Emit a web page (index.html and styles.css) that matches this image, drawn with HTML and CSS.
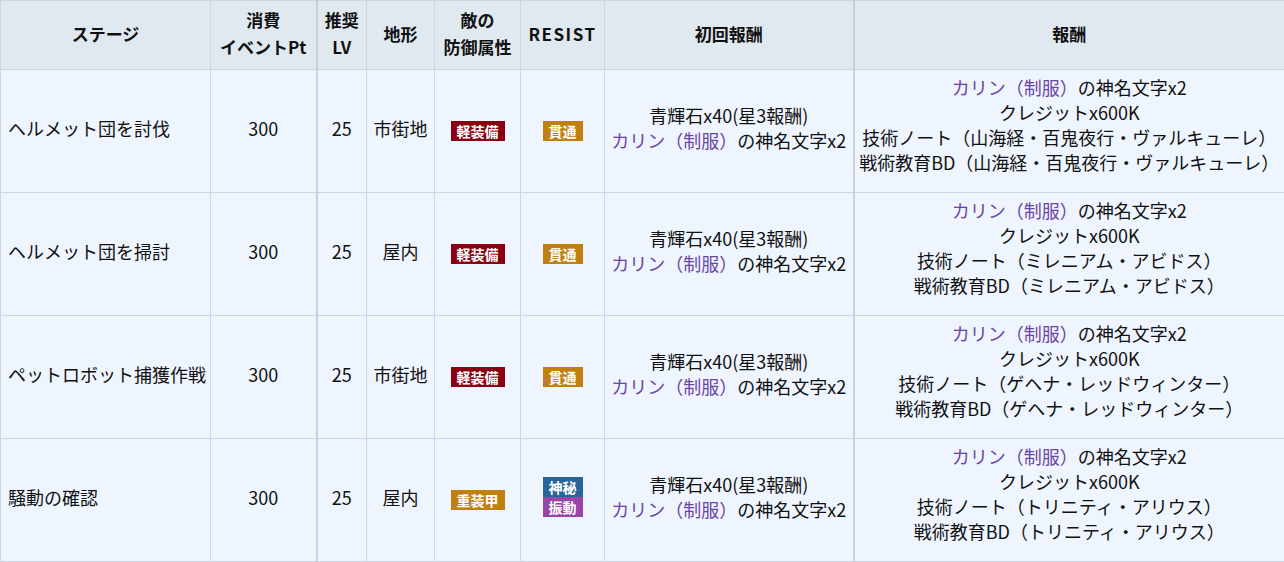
FILE: index.html
```html
<!DOCTYPE html>
<html lang="ja">
<head>
<meta charset="utf-8">
<link rel="stylesheet" href="styles.css">
</head>
<body>
<table class="stage-table">
  <colgroup>
    <col class="c-stage"><col class="c-pt"><col class="c-lv"><col class="c-terrain"><col class="c-def"><col class="c-res"><col class="c-first"><col class="c-reward">
  </colgroup>
  <thead>
    <tr>
      <th>ステージ</th>
      <th>消費<br>イベントPt</th>
      <th class="sep">推奨<br>LV</th>
      <th>地形</th>
      <th>敵の<br>防御属性</th>
      <th><span class="latin">RESIST</span></th>
      <th>初回報酬</th>
      <th class="sep">報酬</th>
    </tr>
  </thead>
  <tbody>
    <tr>
      <td class="left">ヘルメット団を討伐</td>
      <td>300</td>
      <td class="sep">25</td>
      <td>市街地</td>
      <td><span class="badge red">軽装備</span></td>
      <td><span class="badge orange">貫通</span></td>
      <td>青輝石x40(星3報酬)<br><span class="pu">カリン（制服）</span>の神名文字x2</td>
      <td class="sep multi"><span class="pu">カリン（制服）</span>の神名文字x2<br>クレジットx600K<br>技術ノート（山海経・百鬼夜行・ヴァルキューレ）<br>戦術教育BD（山海経・百鬼夜行・ヴァルキューレ）</td>
    </tr>
    <tr>
      <td class="left">ヘルメット団を掃討</td>
      <td>300</td>
      <td class="sep">25</td>
      <td>屋内</td>
      <td><span class="badge red">軽装備</span></td>
      <td><span class="badge orange">貫通</span></td>
      <td>青輝石x40(星3報酬)<br><span class="pu">カリン（制服）</span>の神名文字x2</td>
      <td class="sep multi"><span class="pu">カリン（制服）</span>の神名文字x2<br>クレジットx600K<br>技術ノート（ミレニアム・アビドス）<br>戦術教育BD（ミレニアム・アビドス）</td>
    </tr>
    <tr>
      <td class="left">ペットロボット捕獲作戦</td>
      <td>300</td>
      <td class="sep">25</td>
      <td>市街地</td>
      <td><span class="badge red">軽装備</span></td>
      <td><span class="badge orange">貫通</span></td>
      <td>青輝石x40(星3報酬)<br><span class="pu">カリン（制服）</span>の神名文字x2</td>
      <td class="sep multi"><span class="pu">カリン（制服）</span>の神名文字x2<br>クレジットx600K<br>技術ノート（ゲヘナ・レッドウィンター）<br>戦術教育BD（ゲヘナ・レッドウィンター）</td>
    </tr>
    <tr>
      <td class="left">騒動の確認</td>
      <td>300</td>
      <td class="sep">25</td>
      <td>屋内</td>
      <td><span class="badge orange">重装甲</span></td>
      <td><span class="stack"><span class="badge blue">神秘</span><span class="badge purple">振動</span></span></td>
      <td>青輝石x40(星3報酬)<br><span class="pu">カリン（制服）</span>の神名文字x2</td>
      <td class="sep multi"><span class="pu">カリン（制服）</span>の神名文字x2<br>クレジットx600K<br>技術ノート（トリニティ・アリウス）<br>戦術教育BD（トリニティ・アリウス）</td>
    </tr>
  </tbody>
</table>
</body>
</html>
```

FILE: styles.css
```css
html, body {
  margin: 0;
  padding: 0;
  background: #ffffff;
}

body {
  font-family: "Noto Sans CJK JP", "Noto Sans", sans-serif;
  color: #111;
}

.stage-table {
  border-collapse: collapse;
  table-layout: fixed;
  width: 1284px;
  font-size: 18px;
  line-height: 25px;
}

.c-stage { width: 210px; }
.c-pt { width: 106px; }
.c-lv { width: 50px; }
.c-terrain { width: 68px; }
.c-def { width: 86px; }
.c-res { width: 84px; }
.c-first { width: 249px; }
.c-reward { width: 431px; }

.stage-table th,
.stage-table td {
  border: 1px solid #cdd5df;
  text-align: center;
  vertical-align: middle;
  padding: 0 2px;
  white-space: nowrap;
}

.stage-table th {
  background: #e0e8f0;
  font-weight: 700;
  height: 64px;
  padding-bottom: 4px;
  font-size: 17px;
  line-height: 27px;
  color: #111;
}

.latin {
  letter-spacing: 1.5px;
}

.stage-table td {
  background: #eef5fe;
  height: 116px;
  padding-bottom: 6px;
}

.stage-table td.multi {
  padding-bottom: 13px;
  height: 109px;
}

.stage-table .sep {
  border-left: 2px solid #c8d0da;
}

.stage-table td.left {
  text-align: left;
  padding-left: 7px;
}

.pu {
  color: #6c44a4;
}

.badge {
  display: inline-block;
  color: #fff;
  font-size: 14px;
  font-weight: 700;
  line-height: 20px;
  height: 20px;
  padding: 0 6px;
  vertical-align: middle;
}

.stack {
  display: inline-flex;
  flex-direction: column;
  vertical-align: middle;
}

.red { background: #8a0012; }
.orange { background: #c0800f; }
.blue { background: #28669a; }
.purple { background: #9a45a6; }
```
